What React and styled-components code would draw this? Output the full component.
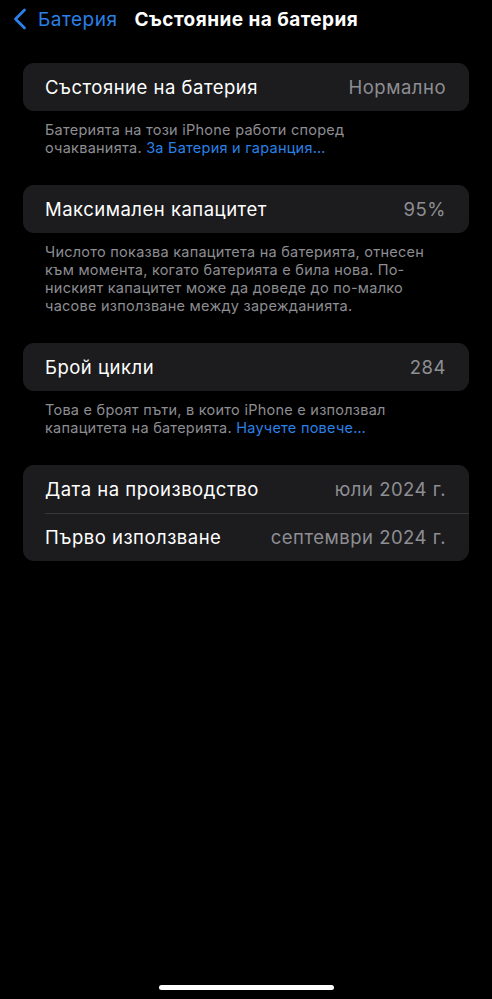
import React from "react";
import styled, { createGlobalStyle } from "styled-components";

const GlobalStyle = createGlobalStyle`
  html, body {
    margin: 0;
    padding: 0;
    background: #000;
  }
  body {
    font-family: Inter, "Noto Sans", "Liberation Sans", sans-serif;
    -webkit-font-smoothing: antialiased;
  }
`;

// note lines are kept as on the device, so the wrapping matches
const sections = [
  {
    rows: [{ label: "Състояние на батерия", value: "Нормално" }],
    note: ["Батерията на този iPhone работи според", "очакванията."],
    link: "За Батерия и гаранция…",
  },
  {
    rows: [{ label: "Максимален капацитет", value: "95%" }],
    note: [
      "Числото показва капацитета на батерията, отнесен",
      "към момента, когато батерията е била нова. По-",
      "ниският капацитет може да доведе до по-малко",
      "часове използване между зарежданията.",
    ],
  },
  {
    rows: [{ label: "Брой цикли", value: "284" }],
    note: ["Това е броят пъти, в които iPhone е използвал", "капацитета на батерията."],
    link: "Научете повече…",
  },
  {
    rows: [
      { label: "Дата на производство", value: "юли 2024 г." },
      { label: "Първо използване", value: "септември 2024 г." },
    ],
  },
];

const App = () => {
  return (
    <Page lang="bg">
      <GlobalStyle />
      <NavBar>
        <BackButton>
          <svg width="14" height="22" viewBox="0 0 14 22" fill="none">
            <path
              d="M11.5 2 L2.5 11 L11.5 20"
              stroke="currentColor"
              strokeWidth="2.8"
              strokeLinecap="round"
              strokeLinejoin="round"
            />
          </svg>
          <span>Батерия</span>
        </BackButton>
        <Title>Състояние на батерия</Title>
      </NavBar>

      <Content>
        {sections.map((s, i) => (
          <Section key={i}>
            <Card>
              {s.rows.map((r, j) => (
                <Row key={j} divided={j > 0}>
                  <Label>{r.label}</Label>
                  <Value>{r.value}</Value>
                </Row>
              ))}
            </Card>
            {s.note && (
              <Note>
                {s.note.map((line, k) => (
                  <NoteLine key={k}>
                    {line}
                    {k === s.note.length - 1 && s.link && (
                      <>
                        {" "}
                        <Link>{s.link}</Link>
                      </>
                    )}
                  </NoteLine>
                ))}
              </Note>
            )}
          </Section>
        ))}
      </Content>

      <HomeIndicator />
    </Page>
  );
};

const Page = styled.div`
  min-height: 100vh;
  background: #000;
  display: flex;
  flex-direction: column;
  box-sizing: border-box;
`;

const NavBar = styled.header`
  display: flex;
  align-items: center;
  height: 38px;
  padding-left: 13px;
`;

const BackButton = styled.div`
  display: flex;
  align-items: center;
  gap: 11px;
  color: #2a80e6;
  font-size: 19px;
  letter-spacing: 0.5px;
`;

const Title = styled.h1`
  margin: 0 0 0 17px;
  color: #fff;
  font-size: 19px;
  font-weight: 700;
  letter-spacing: 0.45px;
`;

const Content = styled.main`
  display: flex;
  flex-direction: column;
  gap: 28px;
  padding: 25px 23px 0;
`;

const Section = styled.section`
  display: flex;
  flex-direction: column;
`;

const Card = styled.div`
  background: #1c1c1e;
  border-radius: 11px;
  overflow: hidden;
`;

const Row = styled.div`
  position: relative;
  display: flex;
  align-items: center;
  justify-content: space-between;
  height: 48px;
  padding: 0 23px 0 22px;

  ${({ divided }) =>
    divided &&
    `
    &::before {
      content: "";
      position: absolute;
      top: 0;
      left: 22px;
      right: 0;
      height: 1px;
      background: #38383a;
    }
  `}
`;

const Label = styled.span`
  color: #fff;
  font-size: 18.5px;
  letter-spacing: 0.5px;
`;

const Value = styled.span`
  color: #8e8e93;
  font-size: 18.5px;
  letter-spacing: 0.5px;
`;

const Note = styled.p`
  margin: 0;
  padding: 10px 0 0 22px;
  color: #8d8d92;
  font-size: 14.5px;
  line-height: 18px;
  letter-spacing: 0.25px;
`;

const NoteLine = styled.span`
  display: block;
  white-space: nowrap;
`;

const Link = styled.span`
  color: #2a80e6;
`;

const HomeIndicator = styled.div`
  align-self: center;
  width: 175px;
  height: 5px;
  border-radius: 3px;
  background: #fff;
  margin-top: auto;
  margin-bottom: 9px;
`;

export default App;
